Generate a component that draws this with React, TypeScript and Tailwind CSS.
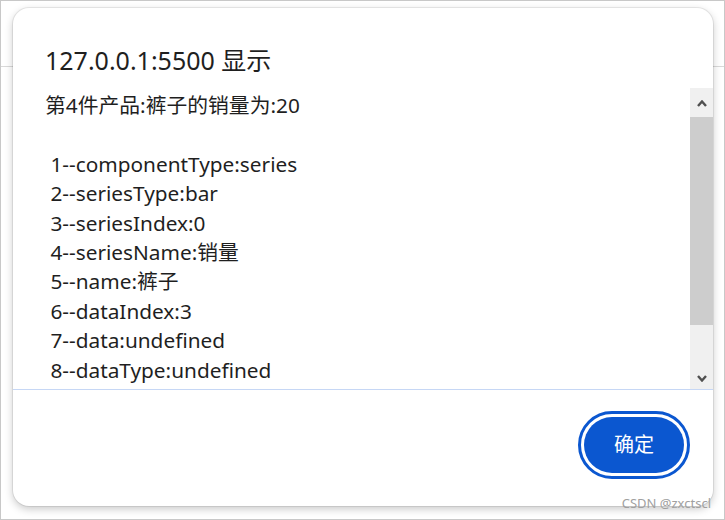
import React from 'react';

const lines = [
  '第4件产品:裤子的销量为:20',
  '',
  ' 1--componentType:series',
  ' 2--seriesType:bar',
  ' 3--seriesIndex:0',
  ' 4--seriesName:销量',
  ' 5--name:裤子',
  ' 6--dataIndex:3',
  ' 7--data:undefined',
  ' 8--dataType:undefined',
];

const font = "font-['Noto_Sans','Noto_Sans_CJK_SC',sans-serif]";

function Chevron({ up }: { up?: boolean }) {
  return (
    <svg width="10" height="7" viewBox="0 0 10 7" className={up ? '' : 'rotate-180'}>
      <path d="M1 6 L5 1.5 L9 6" fill="none" stroke="#505050" strokeWidth="2.4" strokeLinejoin="miter" />
    </svg>
  );
}

export default function App() {
  return (
    <div className={`relative w-[725px] h-[520px] bg-white border border-[#c8c8c8] overflow-hidden ${font}`}>
      {/* page header behind the alert */}
      <div className="h-[66px] border-b border-[#d9d9d9]" />

      <div className="absolute left-[12px] top-[7px] w-[700px] h-[498px] bg-white rounded-[16px] shadow-[0_0_0_1px_rgba(0,0,0,0.07),0_3px_9px_rgba(0,0,0,0.22)] flex flex-col">
        <div className="pl-[32px] pt-[37px] text-[25px] leading-[30px] text-[#1f1f1f]">127.0.0.1:5500 显示</div>

        <div className="mt-[13px] h-[302px] flex border-b border-[#c6d7f5]">
          <div className="flex-1 overflow-hidden pl-[32px] pt-[3px] text-[20.8px] leading-[29.4px] text-[#1f1f1f] whitespace-pre">
            {lines.map((l, i) => (
              <div key={i} className="h-[29.4px]">{l}</div>
            ))}
          </div>
          {/* scrollbar */}
          <div className="w-[23px] bg-[#f0f0f0] flex flex-col">
            <div className="h-[29px] flex justify-center pt-[12px]">
              <Chevron up />
            </div>
            <div className="h-[208px] bg-[#cdcdcd]" />
            <div className="flex-1" />
            <div className="h-[22px] flex items-center justify-center">
              <Chevron />
            </div>
          </div>
        </div>

        <div className="flex justify-end pt-[27px] pr-[29px]">
          <button className="w-[100px] h-[56px] rounded-full bg-[#0b57d0] text-white text-[20px] outline-[3px] outline-solid outline-[#0b57d0] outline-offset-[3px]">
            确定
          </button>
        </div>
      </div>

      <div className="absolute right-[13px] bottom-[8px] text-[13px] leading-[16px] text-[#a0a0a0]">CSDN @zxctscl</div>
    </div>
  );
}
